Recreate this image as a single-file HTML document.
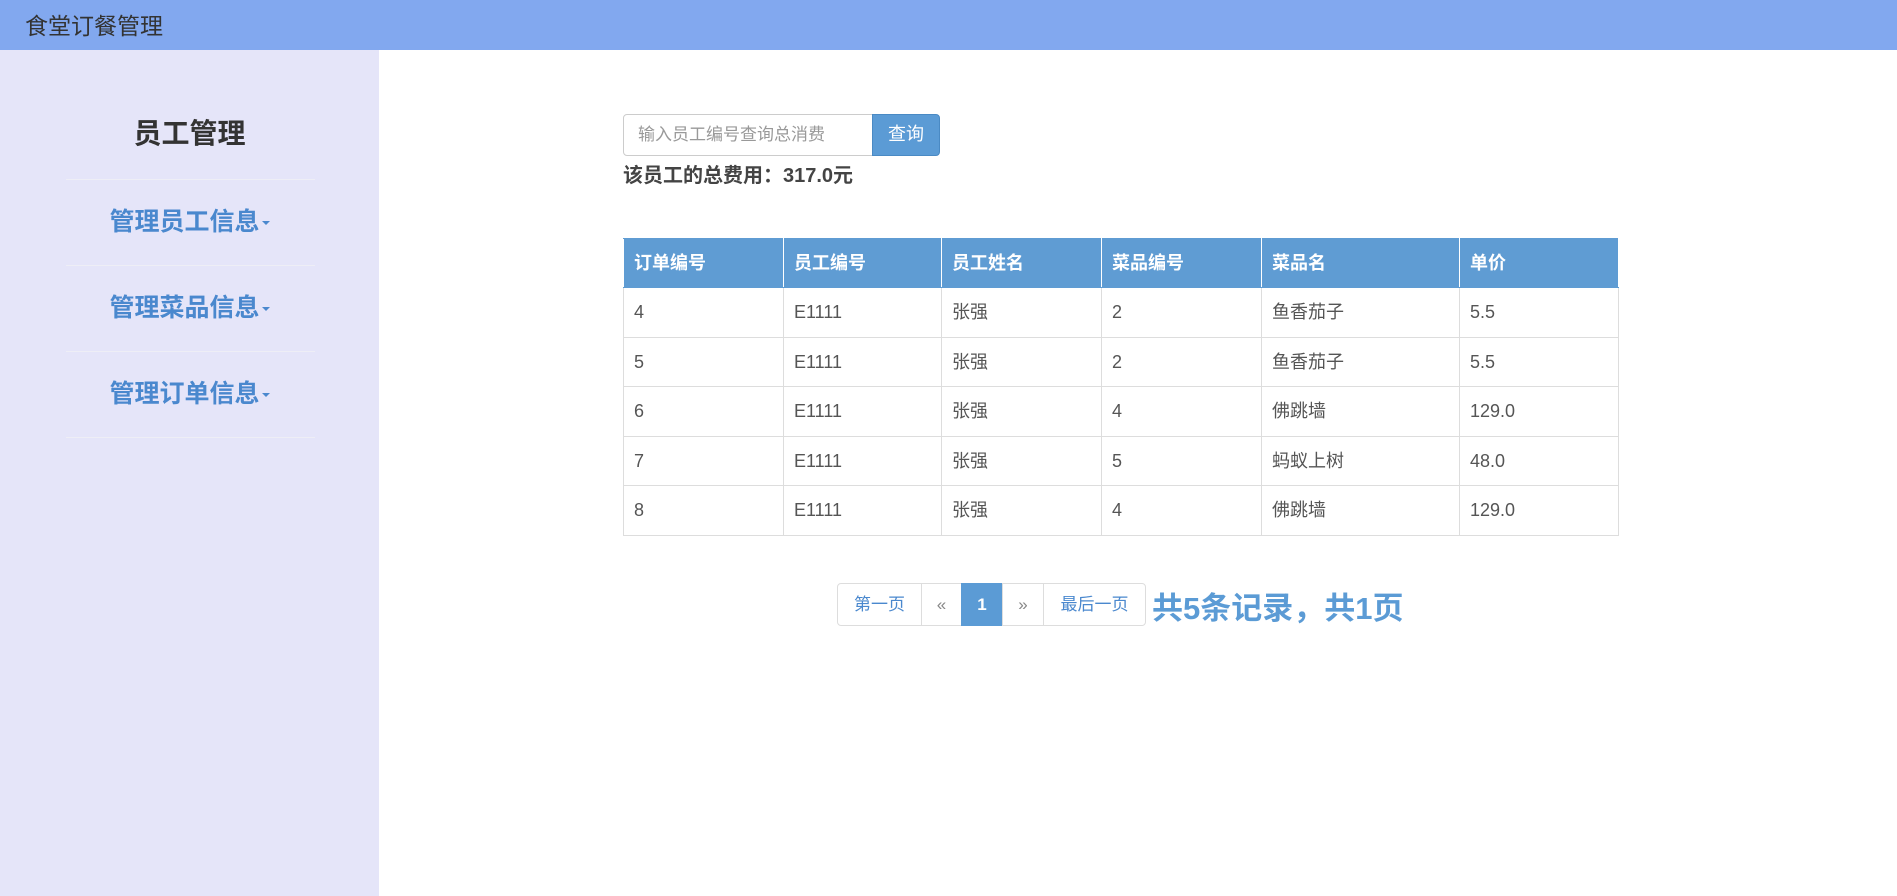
<!DOCTYPE html>
<html><head><meta charset="utf-8"><style>
*{margin:0;padding:0;box-sizing:border-box}
body{width:1897px;height:896px;overflow:hidden;background:#fff;font-family:"Liberation Sans","Noto Sans CJK SC",sans-serif;position:relative}
.top{position:absolute;left:0;top:0;width:1897px;height:50px;background:#82a8ef}
.top span{position:absolute;left:25px;top:7px;font-size:23px;color:#333}
.side{position:absolute;left:0;top:50px;width:379px;height:846px;background:#e5e5f9}
.side h2{position:absolute;left:0;width:379px;text-align:center;top:62px;font-size:28px;color:#333;font-weight:bold}
.line{position:absolute;left:66px;width:249px;height:1px;background:#eeeef6}
.mi{position:absolute;left:0;width:379px;text-align:center;font-size:25px;font-weight:bold;color:#4a88ce}
.mi i{display:inline-block;width:0;height:0;border-left:4px solid transparent;border-right:4px solid transparent;border-top:4px solid #4a88ce;vertical-align:middle;margin-left:2px}
.inp{position:absolute;left:623px;top:114px;width:250px;height:42px;border:1px solid #ccc;border-radius:4px 0 0 4px;font-size:17px;color:#999;padding:0 14px;line-height:40px}
.btn{position:absolute;left:872px;top:114px;width:68px;height:42px;background:#5b9bd5;border:1px solid #4a8ac4;border-radius:0 4px 4px 0;color:#fff;font-size:18px;text-align:center;line-height:38px}
.tot{position:absolute;left:623px;top:159px;font-size:20px;font-weight:bold;color:#444}
table{position:absolute;left:623px;top:238px;border-collapse:collapse;font-size:18px;color:#555}
td,th{border:1px solid #ddd;padding:0 10px;text-align:left;height:49.5px;line-height:20px;vertical-align:middle}
th{background:#5f9cd3;color:#fff;font-weight:bold;height:49px;border-color:#5f9cd3 #fff}
.pg{position:absolute;top:583px;height:43px;border:1px solid #ddd;font-size:17px;color:#4a88ce;line-height:41px;text-align:center}
.cnt{position:absolute;left:1152px;top:583px;font-size:31px;font-weight:bold;color:#5b9bd5}
</style></head><body>
<div class="top"><span>食堂订餐管理</span></div>
<div class="side">
<h2>员工管理</h2>
<div class="line" style="top:129px"></div>
<div class="mi" style="top:152px">管理员工信息<i></i></div>
<div class="line" style="top:215px"></div>
<div class="mi" style="top:238px">管理菜品信息<i></i></div>
<div class="line" style="top:301px"></div>
<div class="mi" style="top:324px">管理订单信息<i></i></div>
<div class="line" style="top:387px"></div>
</div>
<div class="inp">输入员工编号查询总消费</div>
<div class="btn">查询</div>
<div class="tot">该员工的总费用：317.0元</div>
<table>
<colgroup><col style="width:160px"><col style="width:158px"><col style="width:160px"><col style="width:160px"><col style="width:198px"><col style="width:159px"></colgroup>
<tr><th>订单编号</th><th>员工编号</th><th>员工姓名</th><th>菜品编号</th><th>菜品名</th><th>单价</th></tr>
<tr><td>4</td><td>E1111</td><td>张强</td><td>2</td><td>鱼香茄子</td><td>5.5</td></tr>
<tr><td>5</td><td>E1111</td><td>张强</td><td>2</td><td>鱼香茄子</td><td>5.5</td></tr>
<tr><td>6</td><td>E1111</td><td>张强</td><td>4</td><td>佛跳墙</td><td>129.0</td></tr>
<tr><td>7</td><td>E1111</td><td>张强</td><td>5</td><td>蚂蚁上树</td><td>48.0</td></tr>
<tr><td>8</td><td>E1111</td><td>张强</td><td>4</td><td>佛跳墙</td><td>129.0</td></tr>
</table>
<div class="pg" style="left:837px;width:85px;border-radius:4px 0 0 4px">第一页</div>
<div class="pg" style="left:921px;width:41px;color:#888">«</div>
<div class="pg" style="left:961px;width:42px;background:#5b9bd5;border-color:#5b9bd5;color:#fff;font-weight:bold">1</div>
<div class="pg" style="left:1002px;width:42px;color:#888">»</div>
<div class="pg" style="left:1043px;width:103px;border-radius:0 4px 4px 0">最后一页</div>
<div class="cnt">共5条记录，共1页</div>
</body></html>
